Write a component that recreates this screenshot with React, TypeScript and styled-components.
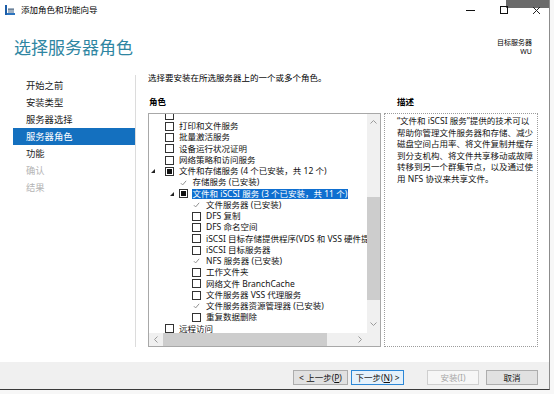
import React from 'react'
import styled, { createGlobalStyle } from 'styled-components'

type CheckState = 'off' | 'partial' | 'installed'

interface RoleRow {
  level: number
  text: string
  state: CheckState
  expander?: boolean
  selected?: boolean
}

const navItems = [
  { label: '开始之前', state: 'done' },
  { label: '安装类型', state: 'done' },
  { label: '服务器选择', state: 'done' },
  { label: '服务器角色', state: 'active' },
  { label: '功能', state: 'done' },
  { label: '确认', state: 'disabled' },
  { label: '结果', state: 'disabled' },
]

// the list is scrolled: only the bottom edge of the first checkbox shows
const roles: RoleRow[] = [
  { level: 0, text: '', state: 'off' },
  { level: 0, text: '打印和文件服务', state: 'off' },
  { level: 0, text: '批量激活服务', state: 'off' },
  { level: 0, text: '设备运行状况证明', state: 'off' },
  { level: 0, text: '网络策略和访问服务', state: 'off' },
  { level: 0, text: '文件和存储服务 (4 个已安装，共 12 个)', state: 'partial', expander: true },
  { level: 1, text: '存储服务 (已安装)', state: 'installed' },
  { level: 1, text: '文件和 iSCSI 服务 (3 个已安装，共 11 个)', state: 'partial', expander: true, selected: true },
  { level: 2, text: '文件服务器 (已安装)', state: 'installed' },
  { level: 2, text: 'DFS 复制', state: 'off' },
  { level: 2, text: 'DFS 命名空间', state: 'off' },
  { level: 2, text: 'iSCSI 目标存储提供程序(VDS 和 VSS 硬件提供程序)', state: 'off' },
  { level: 2, text: 'iSCSI 目标服务器', state: 'off' },
  { level: 2, text: 'NFS 服务器 (已安装)', state: 'installed' },
  { level: 2, text: '工作文件夹', state: 'off' },
  { level: 2, text: '网络文件 BranchCache', state: 'off' },
  { level: 2, text: '文件服务器 VSS 代理服务', state: 'off' },
  { level: 2, text: '文件服务器资源管理器 (已安装)', state: 'installed' },
  { level: 2, text: '重复数据删除', state: 'off' },
  { level: 0, text: '远程访问', state: 'off' },
]

const description = [
  '“文件和 iSCSI 服务”提供的技术可以',
  '帮助你管理文件服务器和存储、减少',
  '磁盘空间占用率、将文件复制并缓存',
  '到分支机构、将文件共享移动或故障',
  '转移到另一个群集节点，以及通过使',
  '用 NFS 协议来共享文件。',
]

const App = () => (
  <>
    <GlobalStyle />
    <Window>
      <TitleBar>
        <HoverBlock />
        <svg width="10" height="10" viewBox="0 0 10 10">
          <rect x="0" y="0" width="2" height="10" fill="#1d5ea8" />
          <rect x="3" y="3" width="6" height="5" fill="#9fb0c2" />
          <rect x="3" y="4" width="6" height="1" fill="#6f8297" />
          <rect x="2" y="8" width="8" height="2" fill="#2c74bf" />
        </svg>
        <TitleText>添加角色和功能向导</TitleText>
        <Controls>
          <svg width="9" height="9" viewBox="0 0 9 9">
            <line x1="0" y1="4.5" x2="9" y2="4.5" stroke="#111" strokeWidth="1" />
          </svg>
          <svg width="9" height="9" viewBox="0 0 9 9">
            <rect x="1.5" y="0.5" width="7" height="7" fill="none" stroke="#111" strokeWidth="1" />
          </svg>
          <svg width="9" height="9" viewBox="0 0 9 9">
            <path d="M1 1 L8 8 M8 1 L1 8" stroke="#222" strokeWidth="1" />
          </svg>
        </Controls>
      </TitleBar>

      <Header>
        <PageTitle>选择服务器角色</PageTitle>
        <TargetServer>
          <div>目标服务器</div>
          <div>WU</div>
        </TargetServer>
      </Header>

      <Body>
        <Nav>
          {navItems.map((item) => (
            <NavItem key={item.label} $state={item.state}>
              {item.label}
            </NavItem>
          ))}
        </Nav>

        <Main>
          <Intro>选择要安装在所选服务器上的一个或多个角色。</Intro>
          <Columns>
            <Column>
              <SectionLabel>角色</SectionLabel>
              <ListBox>
                <Viewport>
                  <RowsInner>
                    {roles.map((r, i) => (
                      <Row key={i} $level={r.level}>
                        <Expander $level={r.level}>
                          {r.expander && (
                            <svg width="4" height="4" viewBox="0 0 4 4">
                              <polygon points="4,0 4,4 0,4" fill="#222" />
                            </svg>
                          )}
                        </Expander>
                        <Check $state={r.state}>
                          {r.state === 'partial' && <PartialMark />}
                          {r.state === 'installed' && (
                            <svg width="8" height="8" viewBox="0 0 8 8">
                              <polyline points="1,4.2 3,6.2 7,1.5" fill="none" stroke="#8c8c8c" strokeWidth="1.1" />
                            </svg>
                          )}
                        </Check>
                        {r.text && <RowLabel $selected={r.selected}>{r.text}</RowLabel>}
                      </Row>
                    ))}
                  </RowsInner>
                </Viewport>
                <VScroll>
                  <ArrowButton>
                    <svg width="7" height="4" viewBox="0 0 7 4">
                      <polyline points="0.5,3.5 3.5,0.5 6.5,3.5" fill="none" stroke="#9a9a9a" />
                    </svg>
                  </ArrowButton>
                  <Track>
                    <VThumb />
                  </Track>
                  <ArrowButton>
                    <svg width="7" height="4" viewBox="0 0 7 4">
                      <polyline points="0.5,0.5 3.5,3.5 6.5,0.5" fill="none" stroke="#9a9a9a" />
                    </svg>
                  </ArrowButton>
                </VScroll>
                <HScroll>
                  <ArrowButton>
                    <svg width="4" height="7" viewBox="0 0 4 7">
                      <polyline points="3.5,0.5 0.5,3.5 3.5,6.5" fill="none" stroke="#9a9a9a" />
                    </svg>
                  </ArrowButton>
                  <Track>
                    <HThumb />
                  </Track>
                  <ArrowButton>
                    <svg width="4" height="7" viewBox="0 0 4 7">
                      <polyline points="0.5,0.5 3.5,3.5 0.5,6.5" fill="none" stroke="#9a9a9a" />
                    </svg>
                  </ArrowButton>
                </HScroll>
                <Corner />
              </ListBox>
            </Column>
            <Column>
              <SectionLabel $indent>描述</SectionLabel>
              <DescBox>
                {description.map((line) => (
                  <div key={line}>{line}</div>
                ))}
              </DescBox>
            </Column>
          </Columns>
        </Main>
      </Body>

      <Footer>
        <Button $width={55}>
          &lt; 上一步(<u>P</u>)
        </Button>
        <Button $width={53} $gap={3} $focused>
          下一步(<u>N</u>) &gt;
        </Button>
        <Button $width={52} $gap={23} disabled>
          安装(I)
        </Button>
        <Button $width={52} $gap={7}>
          取消
        </Button>
      </Footer>
    </Window>
  </>
)

const GlobalStyle = createGlobalStyle`
  html, body {
    margin: 0;
    padding: 0;
    background: #f7f7f7;
  }
  body {
    font-family: "Noto Sans", "Noto Sans CJK SC", sans-serif;
    color: #000;
  }
  * {
    box-sizing: border-box;
  }
`

const Window = styled.div`
  position: relative;
  width: 550px;
  height: 390px;
  display: flex;
  flex-direction: column;
  background: #fff;
  border-right: 1px solid #8c8c8c;
  border-bottom: 1px solid #3a3a3a;
`

const TitleBar = styled.div`
  position: relative;
  height: 20px;
  display: flex;
  align-items: center;
  padding-left: 5px;
  svg {
    position: relative;
  }
`

const HoverBlock = styled.div`
  position: absolute;
  top: 0;
  right: 0;
  width: 43px;
  height: 8px;
  background: #6b6b6b;
`

const TitleText = styled.span`
  margin-left: 6px;
  font-size: 8.5px;
  line-height: 12px;
`

const Controls = styled.div`
  position: relative;
  margin-left: auto;
  display: flex;
  gap: 24px;
  padding-right: 8px;
  align-items: center;
`

const Header = styled.div`
  height: 50px;
  display: flex;
  align-items: center;
  justify-content: space-between;
  padding: 0 17px 0 14px;
`

const PageTitle = styled.h1`
  margin: 5px 0 0;
  font-size: 17px;
  line-height: 22px;
  font-weight: 400;
  color: #2f86a2;
`

const TargetServer = styled.div`
  margin-top: 3px;
  text-align: right;
  font-size: 7px;
  line-height: 9px;
`

const Body = styled.div`
  flex: 1;
  display: flex;
  min-height: 0;
`

const Nav = styled.div`
  width: 136px;
  flex: none;
  margin: 5px 0 15px;
  padding: 1.5px 0 0 13px;
  border-right: 1px solid #dcdcdc;
`

const NavItem = styled.div<{ $state: string }>`
  height: 17px;
  line-height: 17px;
  padding-left: 13px;
  font-size: 9.3px;
  background: ${({ $state }) => ($state === 'active' ? '#1470bf' : 'transparent')};
  color: ${({ $state }) => ($state === 'active' ? '#fff' : $state === 'disabled' ? '#b4b4b4' : '#222')};
`

const Main = styled.div`
  flex: 1;
  display: flex;
  flex-direction: column;
  padding: 1.5px 11px 0 12px;
`

const Intro = styled.div`
  font-size: 8.5px;
  line-height: 11px;
  height: 11px;
  white-space: nowrap;
`

const Columns = styled.div`
  display: grid;
  grid-template-columns: 233px 1fr;
  gap: 3px;
  margin-top: 13px;
`

const Column = styled.div`
  display: flex;
  flex-direction: column;
`

const SectionLabel = styled.div<{ $indent?: boolean }>`
  font-size: 8.5px;
  line-height: 12px;
  font-weight: 700;
  margin-bottom: 5px;
  padding-left: ${({ $indent }) => ($indent ? '13px' : '1px')};
`

const ListBox = styled.div`
  height: 234px;
  border: 1px solid #a8a8a8;
  display: grid;
  grid-template-columns: 1fr 13px;
  grid-template-rows: 1fr 13px;
  overflow: hidden;
`

const Viewport = styled.div`
  overflow: hidden;
  min-width: 0;
`

const RowsInner = styled.div`
  margin-top: -4px;
`

const Row = styled.div<{ $level: number }>`
  height: 11.25px;
  display: flex;
  align-items: center;
  padding-left: ${({ $level }) => 2 + $level * 13.5}px;
  white-space: nowrap;
  font-size: 8.5px;
`

const Expander = styled.div<{ $level: number }>`
  width: 14px;
  flex: none;
  display: flex;
  align-items: center;
  padding-left: ${({ $level }) => ($level === 0 ? 0 : 5)}px;
`

const Check = styled.div<{ $state: CheckState }>`
  width: 9px;
  height: 9px;
  flex: none;
  margin-right: 5px;
  display: flex;
  align-items: center;
  justify-content: center;
  background: #fff;
  border: 1px solid ${({ $state }) => ($state === 'installed' ? 'transparent' : '#333')};
`

const PartialMark = styled.div`
  width: 5px;
  height: 5px;
  background: #111;
`

const RowLabel = styled.span<{ $selected?: boolean }>`
  line-height: 10.5px;
  padding: 0 1px;
  margin-left: -1px;
  background: ${({ $selected }) => ($selected ? '#0f6fd0' : 'transparent')};
  color: ${({ $selected }) => ($selected ? '#fff' : '#111')};
`

const VScroll = styled.div`
  display: flex;
  flex-direction: column;
  background: #f0f0f0;
`

const HScroll = styled.div`
  display: flex;
  background: #f0f0f0;
`

const ArrowButton = styled.div`
  flex: none;
  width: 14px;
  height: 17px;
  display: flex;
  align-items: center;
  justify-content: center;
  ${HScroll} & {
    height: 13px;
  }
  ${VScroll} & {
    width: 13px;
  }
`

const Track = styled.div`
  flex: 1;
  display: flex;
  flex-direction: column;
  ${HScroll} & {
    flex-direction: row;
  }
`

const VThumb = styled.div`
  margin-top: 66px;
  height: 103px;
  background: #cdcdcd;
`

const HThumb = styled.div`
  width: 164px;
  background: #cdcdcd;
`

const Corner = styled.div`
  background: #f0f0f0;
`

const DescBox = styled.div`
  height: 234px;
  border: 1px dotted #9c9c9c;
  padding: 1.5px 4px 0 12px;
  font-size: 8.5px;
  line-height: 11.6px;
  white-space: nowrap;
  color: #111;
`

const Footer = styled.div`
  height: 27px;
  flex: none;
  display: flex;
  justify-content: flex-end;
  align-items: flex-start;
  padding: 8px 11px 0 0;
  background: #f0f0f0;
`

const Button = styled.button<{ $width: number; $gap?: number; $focused?: boolean }>`
  width: ${({ $width }) => $width}px;
  height: 15px;
  margin-left: ${({ $gap }) => $gap ?? 0}px;
  padding: 0;
  font-family: inherit;
  font-size: 8.5px;
  line-height: 13px;
  color: #111;
  background: ${({ $focused }) => ($focused ? '#e5f1fb' : '#e1e1e1')};
  border: 1px solid ${({ $focused }) => ($focused ? '#2c87d6' : '#adadad')};
  &:disabled {
    background: #f6f6f6;
    border-color: #cfcfcf;
    color: #a6a6a6;
  }
`

export default App
